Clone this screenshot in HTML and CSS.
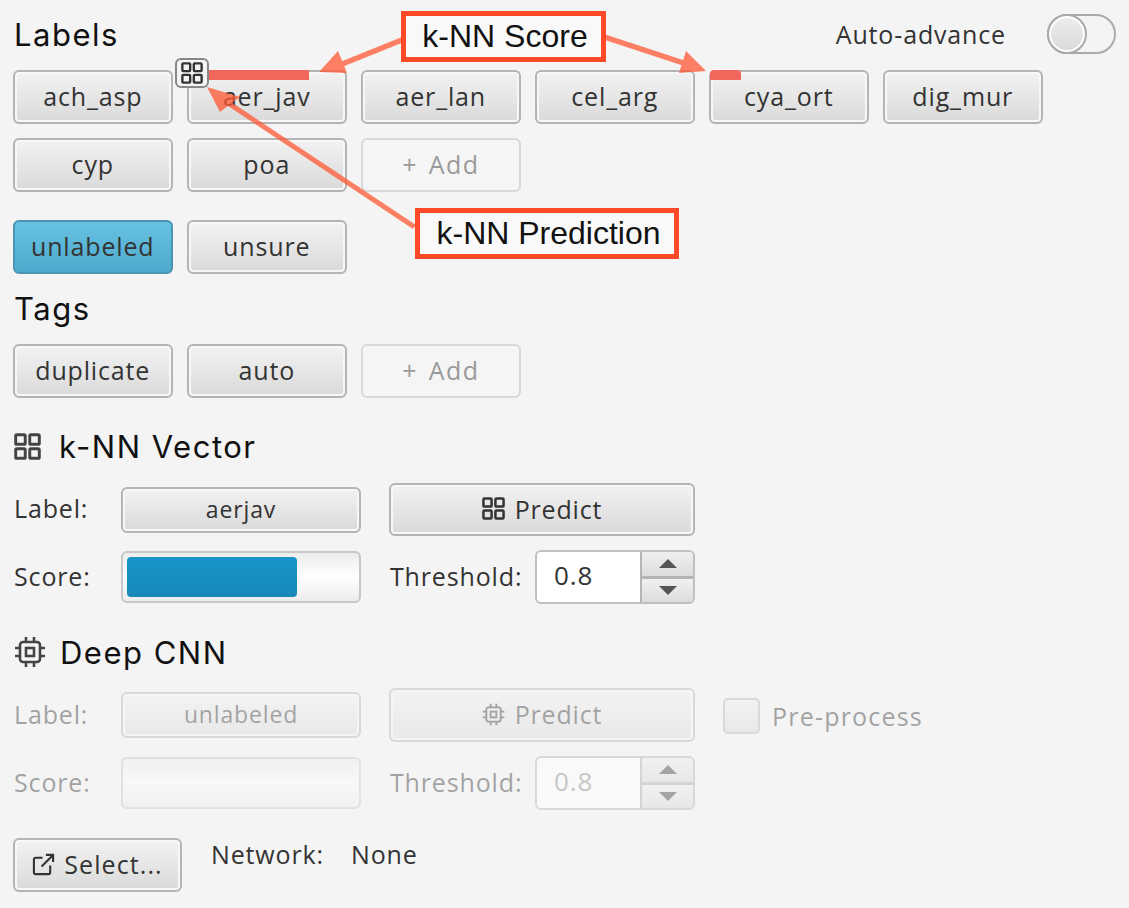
FILE: index.html
```html
<!DOCTYPE html>
<html lang="en">
<head>
  <meta charset="UTF-8">
  <title>Labels</title>
  <link rel="stylesheet" href="styles.css">
</head>
<body>
  <svg class="sprites" width="0" height="0">
    <symbol id="grid" viewBox="0 0 24 24">
      <g fill="none" stroke="currentColor" stroke-width="2.6">
        <rect x="1.5" y="1.5" width="8.5" height="8.5" rx="1"/>
        <rect x="14" y="1.5" width="8.5" height="8.5" rx="1"/>
        <rect x="1.5" y="14" width="8.5" height="8.5" rx="1"/>
        <rect x="14" y="14" width="8.5" height="8.5" rx="1"/>
      </g>
    </symbol>
    <symbol id="chip" viewBox="0 0 32 32">
      <g fill="none" stroke="currentColor" stroke-width="2.6">
        <rect x="6" y="6" width="20" height="20" rx="3"/>
        <rect x="12" y="12" width="8" height="8"/>
        <path d="M12 1v5M20 1v5M12 26v5M20 26v5M1 12h5M1 20h5M26 12h5M26 20h5"/>
      </g>
    </symbol>
    <symbol id="open" viewBox="0 0 24 24">
      <g fill="none" stroke="currentColor" stroke-width="2.2">
        <path d="M11 5H4a2 2 0 0 0-2 2v13a2 2 0 0 0 2 2h13a2 2 0 0 0 2-2v-7"/>
        <path d="M10 14 22 2M14.500 2H22v7.500"/>
      </g>
    </symbol>
  </svg>

  <main class="panel">
    <div class="title-row">
      <h2 class="heading title-head">Labels</h2>
      <div class="auto-advance">
        <span>Auto-advance</span>
        <span class="toggle"><span class="knob"></span></span>
      </div>
    </div>

    <div class="btn-row">
      <button class="btn tall">ach_asp</button>
      <button class="btn tall">aer_jav</button>
      <button class="btn tall">aer_lan</button>
      <button class="btn tall">cel_arg</button>
      <button class="btn tall">cya_ort</button>
      <button class="btn tall">dig_mur</button>
    </div>
    <div class="btn-row row-gap">
      <button class="btn tall">cyp</button>
      <button class="btn tall">poa</button>
      <button class="btn tall add">+ Add</button>
    </div>
    <div class="btn-row row-gap-lg">
      <button class="btn tall active">unlabeled</button>
      <button class="btn tall">unsure</button>
    </div>

    <h2 class="heading section-head tags-head">Tags</h2>
    <div class="btn-row">
      <button class="btn tall">duplicate</button>
      <button class="btn tall">auto</button>
      <button class="btn tall add">+ Add</button>
    </div>

    <h2 class="heading section-head"><svg class="head-icon"><use href="#grid"/></svg>k-NN Vector</h2>
    <div class="form-grid">
      <span class="field-label">Label:</span>
      <button class="btn small">aerjav</button>
      <button class="btn tall predict"><svg class="btn-icon"><use href="#grid"/></svg>Predict</button>
      <span></span>
      <span class="field-label">Score:</span>
      <div class="score"><div class="score-fill" style="width: 74.5%"></div></div>
      <div class="threshold">
        <span class="field-label">Threshold:</span>
        <div class="spinner">
          <span class="spin-value">0.8</span>
          <div class="spin-btns">
            <span class="spin-btn"><i class="tri up"></i></span>
            <span class="spin-btn"><i class="tri down"></i></span>
          </div>
        </div>
      </div>
    </div>

    <h2 class="heading section-head"><svg class="head-icon chip-icon"><use href="#chip"/></svg>Deep CNN</h2>
    <div class="form-grid disabled">
      <span class="field-label">Label:</span>
      <button class="btn small">unlabeled</button>
      <button class="btn tall"><svg class="btn-icon"><use href="#chip"/></svg>Predict</button>
      <label class="check"><span class="check-box"></span>Pre-process</label>
      <span class="field-label">Score:</span>
      <div class="score"></div>
      <div class="threshold">
        <span class="field-label">Threshold:</span>
        <div class="spinner">
          <span class="spin-value">0.8</span>
          <div class="spin-btns">
            <span class="spin-btn"><i class="tri up"></i></span>
            <span class="spin-btn"><i class="tri down"></i></span>
          </div>
        </div>
      </div>
    </div>

    <div class="network-row">
      <button class="btn tall select"><svg class="btn-icon"><use href="#open"/></svg>Select...</button>
      <span class="network-label">Network:</span>
      <span>None</span>
    </div>
  </main>

  <!-- overlays on the label buttons -->
  <div class="score-bar bar-jav"></div>
  <div class="score-bar bar-cya"></div>
  <div class="badge"><svg class="badge-icon"><use href="#grid"/></svg></div>

  <!-- annotations -->
  <svg class="arrows" width="1129" height="908">
    <g fill="#ff5733" stroke="none" opacity="0.75">
      <path d="M402 37 340 62l2 5 62-25z"/>
      <path d="M319 72 338 51l9 22z"/>
      <path d="M604 34 686 61l-2 5-82-27z"/>
      <path d="M706 71 686 51l-7 22z"/>
      <path d="M416 225 228 100l-3 4 188 125z"/>
      <path d="M207 87 240 97l-20 15z"/>
    </g>
  </svg>
  <div class="callout callout-score">k-NN Score</div>
  <div class="callout callout-pred">k-NN Prediction</div>
</body>
</html>
```

FILE: styles.css
```css
* {
  box-sizing: border-box;
}

body {
  margin: 0;
  background-color: #f4f4f4;
  color: #333;
  font-family: "Open Sans", "Noto Sans", sans-serif;
  font-size: 25px;
  letter-spacing: 0.85px;
}

.sprites {
  position: absolute;
}

.panel {
  width: 1129px;
  height: 908px;
  padding: 14px 13px 0 13px;
}

.title-row {
  display: flex;
  justify-content: space-between;
  align-items: center;
  height: 39px;
  margin-bottom: 17px;
}

.heading {
  display: flex;
  align-items: center;
  height: 40px;
  margin: 0;
  padding-bottom: 2px;
  padding-left: 1px;
  color: #111;
  font-family: Inter, "Liberation Sans", sans-serif;
  font-size: 31px;
  font-weight: 400;
  letter-spacing: 1.5px;
}

.title-head {
  padding-top: 2px;
  padding-bottom: 0;
}

.section-head {
  margin-top: 29px;
  margin-bottom: 16px;
}

.tags-head {
  margin-top: 15px;
  margin-bottom: 15px;
}

.head-icon {
  width: 27px;
  height: 27px;
  margin-right: 18px;
  color: #444;
}

.chip-icon {
  width: 32px;
  height: 32px;
  margin-right: 14px;
}

.auto-advance {
  display: flex;
  align-items: center;
  gap: 41px;
}

.toggle {
  display: block;
  width: 69px;
  height: 40px;
  border: 2px solid #aaa;
  border-radius: 20px;
  background-color: #f4f4f4;
  position: relative;
}

.knob {
  position: absolute;
  left: -2px;
  top: -2px;
  width: 40px;
  height: 40px;
  border: 2px solid #aaa;
  border-radius: 50%;
  box-shadow: inset 0 0 0 2px #fff;
  background: linear-gradient(#eee, #d9d9d9);
}

.btn-row {
  display: flex;
  gap: 14.500px;
}

.row-gap {
  margin-top: 14px;
}

.row-gap-lg {
  margin-top: 28px;
}

.btn {
  display: flex;
  align-items: center;
  justify-content: center;
  padding: 0 0 2px;
  border: 2px solid #b5b5b5;
  border-radius: 6px;
  background: linear-gradient(#f2f2f2, #dadada);
  box-shadow: inset 0 0 0 2px #f7f7f7;
  color: #333;
  font-family: inherit;
  font-size: 25px;
  letter-spacing: inherit;
}

.btn.tall {
  height: 54px;
}

.btn.predict {
  height: 53px;
}

.btn-row .btn {
  width: 159.500px;
}

.btn.small {
  height: 46px;
  font-size: 23px;
}

.btn.add {
  border-color: #d9d9d9;
  background: #f5f5f5;
  box-shadow: none;
  color: #999;
  letter-spacing: 1.4px;
  word-spacing: 3px;
}

.btn.active {
  border-color: #4a95b3;
  background: linear-gradient(#66c2e3, #4fa9cc);
  box-shadow: none;
}

.btn-icon {
  width: 23px;
  height: 23px;
  margin-right: 10px;
}

.form-grid {
  display: grid;
  grid-template-columns: 80px 240px 306px auto;
  column-gap: 28px;
  row-gap: 14px;
  align-items: center;
}

.field-label {
  padding-bottom: 3px;
  padding-left: 1px;
  white-space: nowrap;
}

.score {
  height: 52px;
  padding: 4px;
  border: 2px solid #c8c8c8;
  border-radius: 6px;
  background: linear-gradient(#ececec, #fff 50%, #ececec);
}

.score-fill {
  height: 40px;
  border-radius: 4px;
  background: linear-gradient(#1a95c9, #1788b8);
}

.threshold {
  display: flex;
  justify-content: space-between;
  align-items: center;
}

.spinner {
  display: flex;
  width: 160px;
  height: 54px;
  border: 2px solid #c0c0c0;
  border-radius: 6px;
  background-color: #fff;
  overflow: hidden;
}

.spin-value {
  flex: 1;
  padding-left: 17px;
  font-size: 26px;
  line-height: 46px;
}

.spin-btns {
  display: flex;
  flex-direction: column;
  gap: 3px;
  width: 53px;
  border-left: 2px solid #b5b5b5;
  background-color: #b5b5b5;
}

.spin-btn {
  display: flex;
  flex: 1;
  align-items: center;
  justify-content: center;
  background: linear-gradient(#f0f0f0, #dcdcdc);
}

.tri {
  width: 0;
  height: 0;
  border-left: 9px solid transparent;
  border-right: 9px solid transparent;
}

.tri.up {
  border-bottom: 9px solid #555;
}

.tri.down {
  border-top: 9px solid #555;
}

.check {
  display: flex;
  align-items: center;
  gap: 12px;
  margin-top: 2px;
  letter-spacing: 1.2px;
  white-space: nowrap;
}

.check-box {
  width: 37px;
  height: 36px;
  border: 2px solid #b5b5b5;
  border-radius: 5px;
  background: linear-gradient(#f2f2f2, #dadada);
}

.disabled {
  margin-top: -1px;
  color: #333;
}

.disabled > *,
.disabled .threshold > * {
  opacity: 0.42;
}

.disabled > .threshold {
  opacity: 1;
}

.disabled .threshold .spinner {
  opacity: 0.5;
}

.disabled .spin-value {
  opacity: 0.5;
}

.network-row {
  display: flex;
  align-items: flex-start;
  margin-top: 28px;
  line-height: 32px;
}

.btn.select {
  width: 169px;
  margin-right: 29px;
  letter-spacing: 1.1px;
}

.btn.select .btn-icon {
  margin-right: 9px;
}

.network-label {
  width: 140px;
}

.score-bar {
  position: absolute;
  top: 70px;
  height: 10px;
  background-color: #f2665c;
}

.bar-jav {
  left: 208px;
  width: 101px;
}

.bar-cya {
  left: 710px;
  width: 31px;
  border-radius: 4px 4px 0 0;
}

.badge {
  position: absolute;
  left: 175px;
  top: 58px;
  display: flex;
  align-items: center;
  justify-content: center;
  width: 34px;
  height: 30px;
  border: 2px solid #888;
  border-radius: 6px;
  background-color: #f4f4f4;
}

.badge-icon {
  width: 22px;
  height: 22px;
}

.arrows {
  position: absolute;
  left: 0;
  top: 0;
}

.callout {
  position: absolute;
  display: flex;
  align-items: center;
  justify-content: center;
  height: 51px;
  padding-left: 3px;
  border: 5px solid #fc4a28;
  background-color: #f9f9f9;
  color: #111;
  font-family: "Liberation Sans", Arial, sans-serif;
  font-size: 32px;
  letter-spacing: 0;
}

.callout-score {
  left: 401px;
  top: 11px;
  width: 205px;
}

.callout-pred {
  left: 415px;
  top: 208px;
  width: 264px;
}
```
